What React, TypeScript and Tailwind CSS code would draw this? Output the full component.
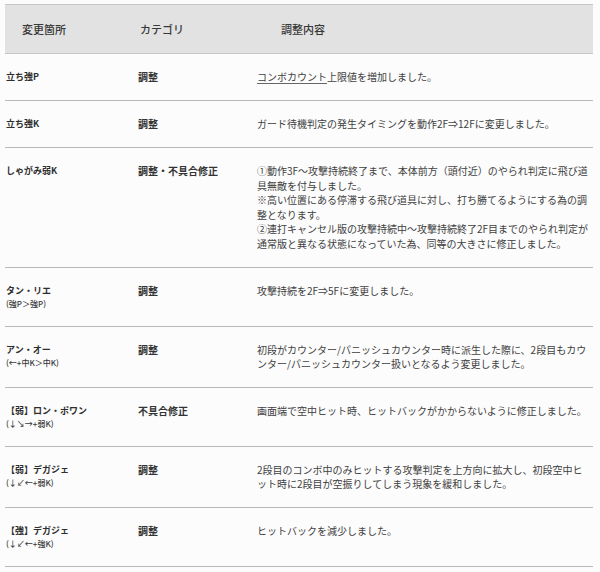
// Patch-notes table: change location / category / details, one row per move.
import type { ReactNode } from "react";

type Row = {
  name: string;
  input?: string;
  category: string;
  detail: ReactNode;
  tall?: boolean;
};

const ROWS: Row[] = [
  {
    name: "立ち強P",
    category: "調整",
    detail: (
      <>
        <span className="underline decoration-[#666] underline-offset-2">コンボカウント</span>
        上限値を増加しました。
      </>
    ),
  },
  {
    name: "立ち強K",
    category: "調整",
    detail: "ガード待機判定の発生タイミングを動作2F⇒12Fに変更しました。",
  },
  {
    name: "しゃがみ弱K",
    category: "調整・不具合修正",
    tall: true,
    detail: (
      <>
        ①動作3F〜攻撃持続終了まで、本体前方（頭付近）のやられ判定に飛び道
        <br />
        具無敵を付与しました。
        <br />
        ※高い位置にある停滞する飛び道具に対し、打ち勝てるようにする為の調
        <br />
        整となります。
        <br />
        ②連打キャンセル版の攻撃持続中〜攻撃持続終了2F目までのやられ判定が
        <br />
        通常版と異なる状態になっていた為、同等の大きさに修正しました。
      </>
    ),
  },
  {
    name: "タン・リエ",
    input: "(強P＞強P)",
    category: "調整",
    detail: "攻撃持続を2F⇒5Fに変更しました。",
  },
  {
    name: "アン・オー",
    input: "(←+中K＞中K)",
    category: "調整",
    detail: (
      <>
        初段がカウンター/パニッシュカウンター時に派生した際に、2段目もカウ
        <br />
        ンター/パニッシュカウンター扱いとなるよう変更しました。
      </>
    ),
  },
  {
    name: "【弱】ロン・ポワン",
    input: "(↓↘→+弱K)",
    category: "不具合修正",
    detail: "画面端で空中ヒット時、ヒットバックがかからないように修正しました。",
  },
  {
    name: "【弱】デガジェ",
    input: "(↓↙←+弱K)",
    category: "調整",
    detail: (
      <>
        2段目のコンボ中のみヒットする攻撃判定を上方向に拡大し、初段空中ヒ
        <br />
        ット時に2段目が空振りしてしまう現象を緩和しました。
      </>
    ),
  },
  {
    name: "【強】デガジェ",
    input: "(↓↙←+強K)",
    category: "調整",
    detail: "ヒットバックを減少しました。",
  },
];

export default function App() {
  return (
    <div className="min-h-[572px] w-[600px] bg-[#fcfcfc] pt-[4px] font-['Noto_Sans_CJK_JP','Noto_Sans',sans-serif] text-[#333]">
      <div className="mx-[5px] w-[588px]">
        <div className="grid h-[50px] grid-cols-[118px_141px_1fr] items-center border-y border-[#c6c6c6] bg-[#e2e2e2] pl-[17px] text-[11px] font-medium text-[#383838]">
          <div>変更箇所</div>
          <div>カテゴリ</div>
          <div>調整内容</div>
        </div>

        {ROWS.map((row) => (
          <div
            key={row.name}
            className="grid grid-cols-[133px_119px_1fr] border-b border-[#b9b9b9] py-4"
          >
            <div className="pl-px">
              <div className="text-[9px] font-bold leading-[14px] text-[#2e2e2e]">{row.name}</div>
              {row.input && (
                <div className="text-[8px] font-medium leading-[12px] text-[#3a3a3a]">{row.input}</div>
              )}
            </div>
            <div className="text-[10px] font-bold leading-[14px] text-[#333]">{row.category}</div>
            <div
              className={
                row.tall
                  ? "whitespace-nowrap text-[10px] leading-[14.5px] text-[#404040]"
                  : "whitespace-nowrap text-[10px] leading-[14px] text-[#404040]"
              }
            >
              {row.detail}
            </div>
          </div>
        ))}
      </div>
    </div>
  );
}
